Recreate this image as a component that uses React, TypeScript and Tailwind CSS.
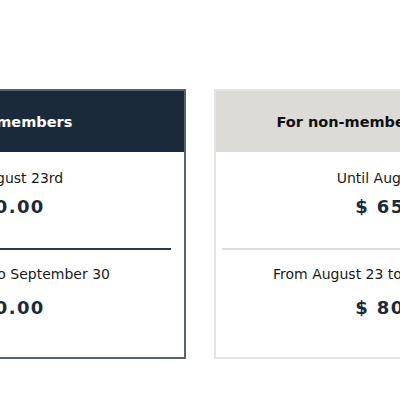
const rows = [
  { label: "Until August 23rd", member: "$ 30.00", other: "$ 65.00" },
  { label: "From August 23 to September 30", member: "$ 60.00", other: "$ 80.00" },
];

const font = { fontFamily: '"DejaVu Sans", "Liberation Sans", sans-serif' };

function PriceCard({ dark }: { dark: boolean }) {
  return (
    <div
      className={`w-[368px] shrink-0 border-2 ${dark ? "border-[#58636e]" : "border-[#e4e4e2]"}`}
    >
      <div
        className={`h-[61px] flex items-center justify-center pt-[3px] text-[14.5px] font-bold ${
          dark ? "bg-[#1b2a3b] text-white pl-[33px]" : "bg-[#dcdbd8] text-[#111] pr-[99px]"
        }`}
      >
        {dark ? "For members" : "For non-members"}
      </div>
      <div className="pt-[16px] pb-[37px] text-center">
        <div className="text-[14px] leading-[20px] text-[#1a1a1a]">{rows[0].label}</div>
        <div className="mt-[7px] text-[18px] leading-[24px] font-bold tracking-[1.4px] text-[#1b2a3b]">
          {dark ? rows[0].member : rows[0].other}
        </div>
        <div
          className={`mt-[29px] h-[2px] ${dark ? "bg-[#2b3a4a] ml-[8px] mr-[13px]" : "bg-[#dedede] ml-[6px] mr-[6px]"}`}
        />
        <div className="mt-[14px] pr-[17px] text-[14px] leading-[20px] text-[#1a1a1a]">{rows[1].label}</div>
        <div className="mt-[12px] text-[18px] leading-[24px] font-bold tracking-[1.4px] text-[#1b2a3b]">
          {dark ? rows[1].member : rows[1].other}
        </div>
      </div>
    </div>
  );
}

export default function App() {
  return (
    <div className="w-[400px] h-[400px] overflow-hidden bg-white" style={font}>
      <div className="flex gap-[28px] -ml-[182px] pt-[89px]">
        <PriceCard dark />
        <PriceCard dark={false} />
      </div>
    </div>
  );
}
